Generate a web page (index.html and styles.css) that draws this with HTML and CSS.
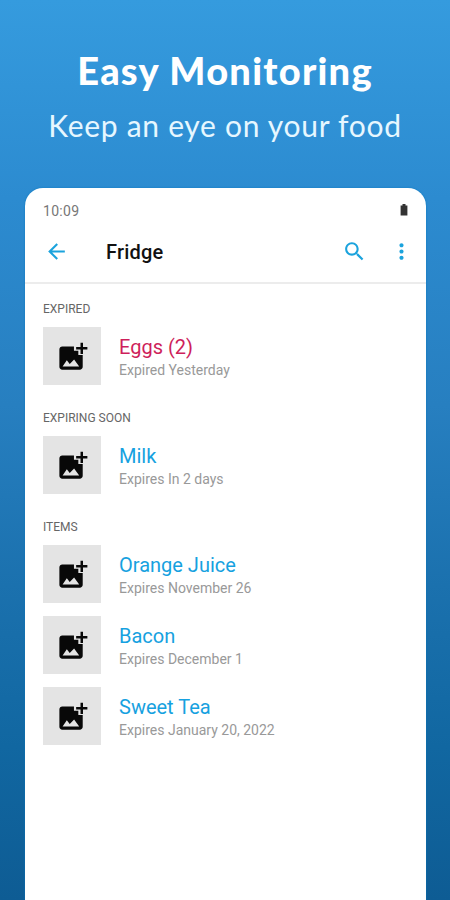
FILE: index.html
```html
<!DOCTYPE html>
<html lang="en">
<head>
<meta charset="utf-8">
<title>Fridge</title>
<link rel="stylesheet" href="styles.css">
</head>
<body>
<svg class="defs" width="0" height="0" aria-hidden="true">
  <symbol id="photo" viewBox="0 0 24 24"><path d="M19.2 7.2v3h-1.7v-3h-3V5.5h3v-3h1.7v3h3v1.7h-3zM16 11V8h-3V5.2H5c-1.1 0-2 .9-2 2V19c0 1.1.9 2 2 2h12c1.1 0 2-.9 2-2v-8h-3zM5.2 18.8l2.9-4.2 2 2.6 3-3.2 3.5 4.8z"/></symbol>
</svg>
<header class="promo">
  <h1>Easy Monitoring</h1>
  <p>Keep an eye on your food</p>
</header>
<main class="phone">
  <div class="status">
    <span>10:09</span>
    <svg class="battery" viewBox="0 0 8 12"><path d="M2.5 0h3v1.4H7.4V11.5H.6V1.4h1.9z"/></svg>
  </div>
  <nav class="bar">
    <svg class="icon" viewBox="0 0 24 24"><path d="M20 11H7.83l5.59-5.59L12 4l-8 8 8 8 1.41-1.41L7.83 13H20v-2z"/></svg>
    <h2>Fridge</h2>
    <svg class="icon search" viewBox="0 0 24 24"><path d="M15.5 14h-.79l-.28-.27C15.41 12.59 16 11.11 16 9.5 16 5.91 13.09 3 9.5 3S3 5.91 3 9.5 5.91 16 9.5 16c1.61 0 3.09-.59 4.23-1.57l.27.28v.79l5 4.99L20.49 19l-4.99-5zm-6 0C7.01 14 5 11.99 5 9.5S7.01 5 9.5 5 14 7.01 14 9.5 11.99 14 9.5 14z"/></svg>
    <svg class="icon more" viewBox="0 0 24 24"><path d="M12 8c1.1 0 2-.9 2-2s-.9-2-2-2-2 .9-2 2 .9 2 2 2zm0 2c-1.1 0-2 .9-2 2s.9 2 2 2 2-.9 2-2-.9-2-2-2zm0 6c-1.1 0-2 .9-2 2s.9 2 2 2 2-.9 2-2-.9-2-2-2z"/></svg>
  </nav>
  <section>
    <h3>EXPIRED</h3>
    <article class="item expired">
      <div class="thumb"><svg><use href="#photo"/></svg></div>
      <div class="info"><h4>Eggs (2)</h4><p>Expired Yesterday</p></div>
    </article>
  </section>
  <section>
    <h3>EXPIRING SOON</h3>
    <article class="item">
      <div class="thumb"><svg><use href="#photo"/></svg></div>
      <div class="info"><h4>Milk</h4><p>Expires In 2 days</p></div>
    </article>
  </section>
  <section>
    <h3>ITEMS</h3>
    <article class="item">
      <div class="thumb"><svg><use href="#photo"/></svg></div>
      <div class="info"><h4>Orange Juice</h4><p>Expires November 26</p></div>
    </article>
    <article class="item">
      <div class="thumb"><svg><use href="#photo"/></svg></div>
      <div class="info"><h4>Bacon</h4><p>Expires December 1</p></div>
    </article>
    <article class="item">
      <div class="thumb"><svg><use href="#photo"/></svg></div>
      <div class="info"><h4>Sweet Tea</h4><p>Expires January 20, 2022</p></div>
    </article>
  </section>
</main>
</body>
</html>
```
FILE: styles.css
```css
* { box-sizing: border-box; margin: 0; padding: 0; }
body {
  height: 900px;
  overflow: hidden;
  display: flex;
  flex-direction: column;
  background: linear-gradient(#359bde 0%, #2c8bd0 22%, #277fc0 45%, #1b71ae 65%, #1167a1 83%, #0e5c94 100%);
  font-family: Roboto, sans-serif;
}
.defs { position: absolute; }
.promo {
  height: 188px;
  flex: none;
  padding-top: 48px;
  color: #fff;
  text-align: center;
  font-family: Lato, sans-serif;
  white-space: nowrap;
}
.promo h1 { font-size: 38px; line-height: 44px; font-weight: 900; letter-spacing: 1.25px; }
.promo p { margin-top: 15px; font-size: 30px; line-height: 36px; font-weight: 400; letter-spacing: 0.7px; color: #e6f7ff; }
.phone {
  flex: 1;
  margin: 0 24px 0 25px;
  border-radius: 18px 18px 0 0;
  background: #fff;
  box-shadow: 0 0 2px #0878be;
}
.status {
  height: 32px;
  padding: 14px 18px 0;
  display: flex;
  justify-content: space-between;
  font-size: 14px;
  line-height: 18px;
  letter-spacing: 0.3px;
  color: #777;
}
.battery { width: 8px; height: 12px; margin-top: 2px; fill: #333; }
.bar {
  height: 64px;
  padding: 0 12px 0 19px;
  display: flex;
  align-items: center;
  border-bottom: 2px solid #ececec;
}
.bar h2 { flex: 1; margin: 2px 0 0 37px; font-size: 20px; font-weight: 500; letter-spacing: 0.2px; color: #111; }
.icon { width: 25px; height: 25px; fill: #1ba3dd; }
.search { margin-right: 22px; }
section { padding: 17px 18px 0; }
section + section { padding-top: 25px; }
h3 { height: 26px; font-size: 12px; line-height: 16px; font-weight: 400; color: #666; }
.item { display: flex; height: 58px; }
.item + .item { margin-top: 13px; }
.thumb {
  width: 58px;
  height: 58px;
  display: grid;
  place-items: center;
  background: #e4e4e4;
}
.thumb svg { width: 35px; height: 35px; fill: #080808; }
.info { margin-left: 18px; padding-top: 8px; }
h4 { font-size: 20px; line-height: 25px; font-weight: 400; color: #16a1e0; }
.info p { margin-top: 2px; font-size: 14px; line-height: 17px; color: #999; }
.expired h4 { color: #ce1f5b; }
```
